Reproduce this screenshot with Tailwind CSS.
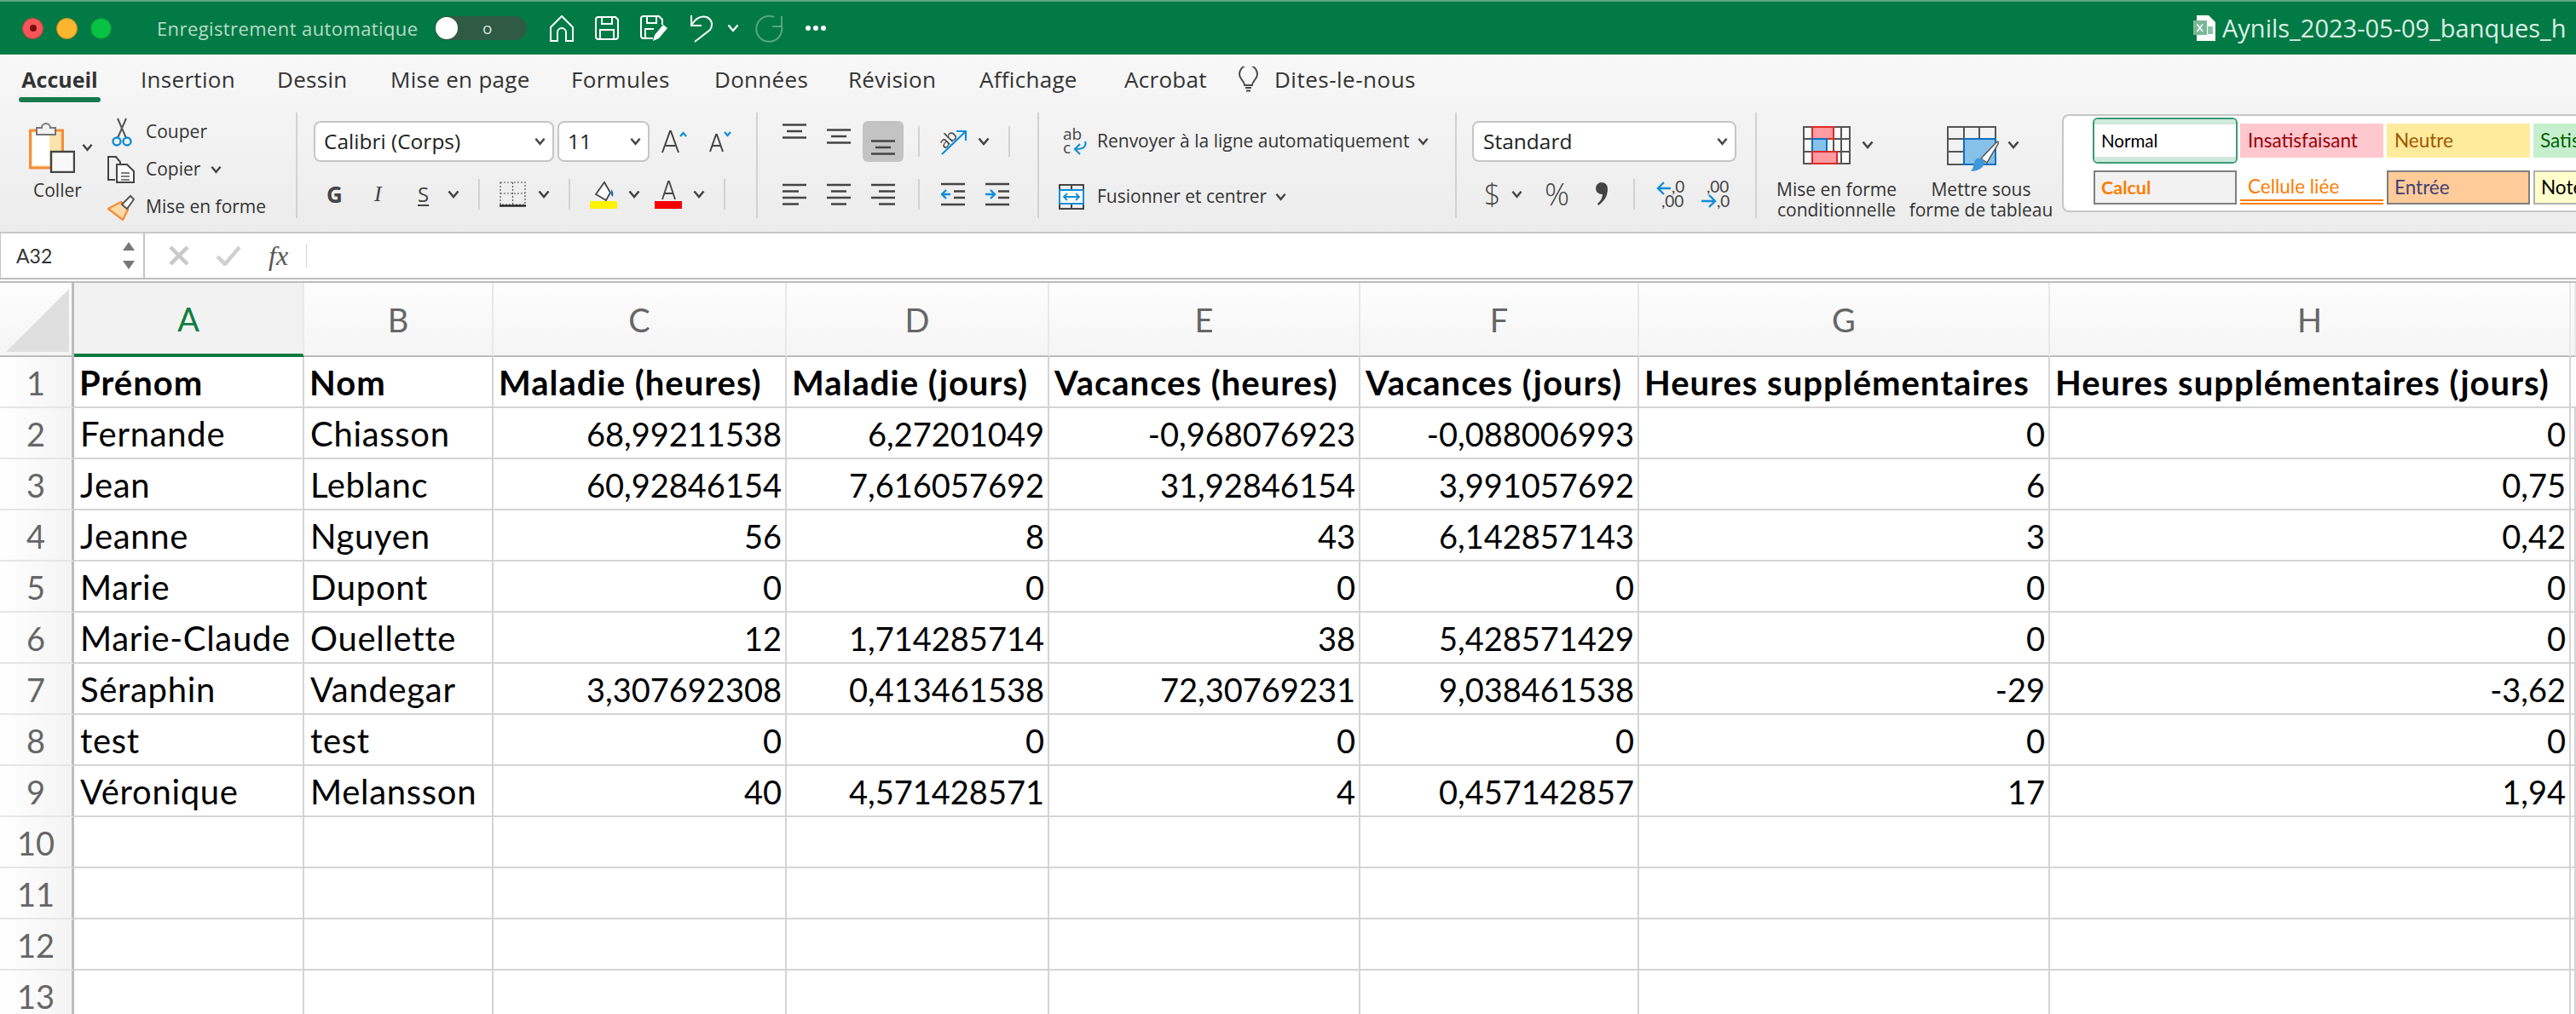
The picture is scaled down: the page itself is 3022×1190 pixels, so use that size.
<!DOCTYPE html>
<html lang="fr">
<head>
<meta charset="UTF-8">
<title>Aynils_2023-05-09_banques_h</title>
<script src="https://cdn.jsdelivr.net/npm/@tailwindcss/browser@4"></script>
</head>
<body class="w-[3022px] h-[1190px] overflow-hidden bg-white font-['Open_Sans',sans-serif] text-[#333]">

<svg class="hidden">
  <symbol id="chev" viewBox="0 0 14 10"><path d="M1.5 1.5 7 8l5.5-6.5" fill="none" stroke="#444" stroke-width="2.6"/></symbol>
  <symbol id="chevw" viewBox="0 0 14 10"><path d="M1.5 1.5 7 8l5.5-6.5" fill="none" stroke="#fff" stroke-width="2.2"/></symbol>
  <symbol id="al-left" viewBox="0 0 28 26"><path d="M0 2h28M0 9.500h19M0 17h28M0 24.500h19" stroke="#444" stroke-width="2.400"/></symbol>
  <symbol id="al-center" viewBox="0 0 28 26"><path d="M0 2h28M5 9.500h18M0 17h28M5 24.500h18" stroke="#444" stroke-width="2.400"/></symbol>
  <symbol id="al-right" viewBox="0 0 28 26"><path d="M0 2h28M9 9.500h19M0 17h28M9 24.500h19" stroke="#444" stroke-width="2.400"/></symbol>
  <symbol id="al-v" viewBox="0 0 28 18"><path d="M0 1.500h28M5 9h18M0 16.500h28" stroke="#444" stroke-width="2.400"/></symbol>
</svg>

<!-- barre de titre -->
<header class="h-[64px] bg-[#027a45] border-t-2 border-[#5fa585] flex items-center relative">
  <div class="w-[25px] h-[25px] ml-[26px] rounded-full bg-[#f4565a] border border-[#c9403f] flex items-center justify-center"><div class="w-[8px] h-[8px] rounded-full bg-[#7c0c0c]"></div></div>
  <div class="w-[25px] h-[25px] ml-[15px] rounded-full bg-[#fbb62f] border border-[#cf8e1d]"></div>
  <div class="w-[25px] h-[25px] ml-[15px] rounded-full bg-[#09c244] border border-[#0a8f35]"></div>
  <span class="ml-[53px] w-[326px] text-[22px] tracking-[0.4px] text-[#b9dcc9] whitespace-nowrap">Enregistrement automatique</span>
  <div class="w-[108px] h-[28px] rounded-full bg-[#2f5a44] flex items-center">
    <div class="w-[26px] h-[26px] rounded-full bg-white ml-px"></div>
    <span class="ml-[29px] text-[19px] leading-none text-[#cfe3d8]">o</span>
  </div>
  <svg class="ml-[27px]" width="28" height="31" viewBox="0 0 28 31"><path d="M14 1 27 14v16h-8V20a5 5 0 0 0-10 0v10H1V14Z" fill="none" stroke="#fff" stroke-width="2"/></svg>
  <svg class="ml-[25px]" width="28" height="28" viewBox="0 0 28 28"><path d="M4 1h20l3 3v20a3 3 0 0 1-3 3H4a3 3 0 0 1-3-3V4a3 3 0 0 1 3-3ZM8 1v8h12V1M6 27V16h16v11" fill="none" stroke="#fff" stroke-width="2"/></svg>
  <svg class="ml-[25px]" width="32" height="31" viewBox="0 0 32 31"><path d="M15 27H4a3 3 0 0 1-3-3V4a3 3 0 0 1 3-3h18l4 4v6M8 1v8h11V1M6 27V16h10" fill="none" stroke="#fff" stroke-width="2"/><path d="M15 30l2-7 10-12 5 4-10 12Z" fill="#fff"/></svg>
  <svg class="ml-[26px]" width="28" height="33" viewBox="0 0 28 33"><path d="M2 1v12h12M2 13C7 4 14 1 20 3c6 3 8 9 4 15L6 32" fill="none" stroke="#fff" stroke-width="2"/></svg>
  <svg class="ml-[16px]" width="14" height="10"><use href="#chevw"/></svg>
  <svg class="ml-[19px]" width="33" height="33" viewBox="0 0 33 33"><path d="M31 14A15 15 0 1 1 22 3M31 2v12H20" fill="none" stroke="#5aa583" stroke-width="2"/></svg>
  <div class="ml-[26px] flex gap-[3px]"><i class="w-[6px] h-[6px] rounded-full bg-white"></i><i class="w-[6px] h-[6px] rounded-full bg-white"></i><i class="w-[6px] h-[6px] rounded-full bg-white"></i></div>
  <svg class="ml-[1604px]" width="26" height="30" viewBox="0 0 26 30"><path d="M4 0h14l8 8v22H4Z" fill="#fff"/><rect x="0" y="6" width="16" height="17" fill="#79b998"/><path d="M4.500 10.500 11 19M11 10.500 4.500 19" stroke="#fff" stroke-width="1.500"/><path d="M17 13h6v9h-6Z" fill="#8cc4a8"/></svg>
  <span class="ml-[8px] text-[29px] font-medium text-[#dcefe5] whitespace-nowrap">Aynils_2023-05-09_banques_h</span>
</header>

<!-- ruban -->
<section class="h-[208px] bg-gradient-to-b from-[#f8f8f8] to-[#ececec]">
  <nav class="h-[68px] flex items-start text-[26px] tracking-[0.3px] leading-[36px] text-[#333] whitespace-nowrap">
    <div class="ml-[22px] w-[96px] flex flex-col items-center">
      <span class="mt-[11px] font-bold text-[25px] tracking-normal">Accueil</span>
      <i class="mt-[3px] w-[96px] h-[6px] rounded-full bg-[#167a4d]"></i>
    </div>
    <span class="mt-[11px] ml-[47px] w-[112px]">Insertion</span>
    <span class="mt-[11px] ml-[48px] w-[85px]">Dessin</span>
    <span class="mt-[11px] ml-[48px] w-[165px]">Mise en page</span>
    <span class="mt-[11px] ml-[47px] w-[120px]">Formules</span>
    <span class="mt-[11px] ml-[48px] w-[110px]">Données</span>
    <span class="mt-[11px] ml-[47px] w-[107px]">Révision</span>
    <span class="mt-[11px] ml-[47px] w-[122px]">Affichage</span>
    <span class="mt-[11px] ml-[48px] w-[100px]">Acrobat</span>
    <svg class="mt-[14px] ml-[34px]" width="23" height="30" viewBox="0 0 23 30"><path d="M7 22c0-5-6-7-6-13a10.500 10.500 0 0 1 21 0c0 6-6 8-6 13ZM8 25h7M9 28.500h5" fill="none" stroke="#444" stroke-width="1.800"/></svg>
    <span class="mt-[11px] ml-[19px] tracking-[0.5px]">Dites-le-nous</span>
  </nav>

  <div class="h-[124px] flex text-[21px] whitespace-nowrap">
    <!-- presse-papiers -->
    <div class="w-[347px] flex shrink-0">
      <div class="w-[126px] pt-[11px]">
        <div class="flex items-center pl-[34px]">
          <svg width="54" height="60" viewBox="0 0 54 60"><rect x="1.500" y="10" width="38" height="44" fill="#fde3ad" stroke="#f58c3b" stroke-width="3"/><rect x="4" y="13" width="20" height="38" fill="#fff"/><path d="M9 10v-3h6a5 5 0 0 1 10 0h6v8H9Z" fill="#f2f2f2" stroke="#777" stroke-width="2"/><rect x="26" y="35" width="27" height="24" fill="#f8f8f8" stroke="#444" stroke-width="2.400"/></svg>
          <svg class="ml-[8px]" width="13" height="10"><use href="#chev"/></svg>
        </div>
        <div class="mt-[5px] ml-[39px] leading-[30px] text-[#333]">Coller</div>
      </div>
      <div class="pt-px">
        <div class="h-[44px] flex items-center">
          <svg class="ml-[5px]" width="24" height="34" viewBox="0 0 24 34"><path d="M7 1 17 24M17 1 7 24" stroke="#555" stroke-width="2"/><circle cx="6" cy="28" r="4.500" fill="none" stroke="#0f8dd6" stroke-width="2.400"/><circle cx="18" cy="28" r="4.500" fill="none" stroke="#0f8dd6" stroke-width="2.400"/></svg>
          <span class="ml-[16px]">Couper</span>
        </div>
        <div class="h-[44px] flex items-center">
          <svg width="32" height="32" viewBox="0 0 32 32"><path d="M9 28H1V1h9l5 6v3" fill="none" stroke="#444" stroke-width="2"/><path d="M11 10h12l8 8v13H11Z" fill="#fbfbfb" stroke="#444" stroke-width="2"/><path d="M16 20h10M16 24h10M16 28h10" stroke="#555" stroke-width="1.600"/></svg>
          <span class="ml-[13px]">Copier</span>
          <svg class="ml-[12px]" width="13" height="10"><use href="#chev"/></svg>
        </div>
        <div class="h-[44px] flex items-center">
          <svg width="32" height="31" viewBox="0 0 32 31"><path d="M1 17 16 9l8 9-6 12Z" fill="#fdd9a8" stroke="#f58c3b" stroke-width="2.400"/><path d="M17 12 27 2l4 4-8 11Z" fill="#fff" stroke="#555" stroke-width="2"/></svg>
          <span class="ml-[13px]">Mise en forme</span>
        </div>
      </div>
    </div>
    <i class="w-[2px] bg-[#d2d2d2] shrink-0"></i>

    <!-- police -->
    <div class="w-[538px] shrink-0">
      <div class="mt-[10px] h-[48px] flex items-center">
        <div class="ml-[19px] w-[282px] h-[48px] rounded-[8px] border-2 border-[#c6c6c6] bg-white flex items-center justify-between pl-[10px] pr-[8px] text-[#222] text-[24.500px]"><span>Calibri (Corps)</span><svg width="13" height="10"><use href="#chev"/></svg></div>
        <div class="ml-[4px] w-[108px] h-[48px] rounded-[8px] border-2 border-[#c6c6c6] bg-white flex items-center justify-between pl-[10px] pr-[8px] text-[#222] text-[24.500px]"><span>11</span><svg width="13" height="10"><use href="#chev"/></svg></div>
        <svg class="ml-[14px]" width="30" height="28" viewBox="0 0 30 28"><path d="M1 27 10 2h1l9 25M5 19h11" fill="none" stroke="#444" stroke-width="2"/><path d="M22 8l3.500-4L29 8" fill="none" stroke="#0f8dd6" stroke-width="2.200"/></svg>
        <svg class="ml-[26px]" width="26" height="26" viewBox="0 0 26 26"><path d="M1 25 8 5h1l7 20M4 18h9" fill="none" stroke="#444" stroke-width="2"/><path d="M18 2l3.500 4L25 2" fill="none" stroke="#0f8dd6" stroke-width="2.200"/></svg>
      </div>
      <div class="mt-[20px] h-[36px] flex items-center">
        <span class="ml-[34px] w-[18px] text-[26px] font-bold text-[#444] leading-none">G</span>
        <span class="ml-[38px] w-[12px] text-[26px] italic font-['Liberation_Serif',serif] text-[#444] leading-none">I</span>
        <span class="ml-[39px] w-[14px] text-[24px] underline underline-offset-3 text-[#444] leading-none">S</span>
        <svg class="ml-[21px]" width="14" height="10"><use href="#chev"/></svg>
        <i class="ml-[22px] w-[2px] h-[36px] bg-[#d2d2d2]"></i>
        <svg class="ml-[23px]" width="31" height="30" viewBox="0 0 31 30"><path d="M1 1h29v26H1ZM15.500 1v26M1 14h29" fill="none" stroke="#555" stroke-width="1.200" stroke-dasharray="2 2"/><path d="M0 28.500h31" stroke="#222" stroke-width="2.400"/></svg>
        <svg class="ml-[14px]" width="14" height="10"><use href="#chev"/></svg>
        <i class="ml-[22px] w-[2px] h-[36px] bg-[#d2d2d2]"></i>
        <svg class="ml-[23px]" width="32" height="34" viewBox="0 0 32 34"><path d="M7 17 17 3l7 12-5 9Z" fill="#fff" stroke="#444" stroke-width="1.800"/><path d="M25 11c2 2 3 5 2 9l-2-2Z" fill="#0f6fc0"/><rect y="25" width="32" height="9" fill="#fff200"/></svg>
        <svg class="ml-[13px]" width="14" height="10"><use href="#chev"/></svg>
        <svg class="ml-[17px]" width="32" height="34" viewBox="0 0 32 34"><path d="M9 23 16 2h1l7 21M11 16h11" fill="none" stroke="#444" stroke-width="1.800"/><rect y="25" width="32" height="9" fill="#f50000"/></svg>
        <svg class="ml-[13px]" width="14" height="10"><use href="#chev"/></svg>
        <i class="ml-[22px] w-[2px] h-[36px] bg-[#d2d2d2]"></i>
      </div>
    </div>
    <i class="w-[2px] bg-[#d2d2d2] shrink-0"></i>

    <!-- alignement -->
    <div class="w-[328px] shrink-0">
      <div class="mt-[10px] h-[48px] flex items-center">
        <svg class="ml-[29px] mb-[24px]" width="28" height="18"><use href="#al-v"/></svg>
        <svg class="ml-[24px] mb-[12px]" width="28" height="18"><use href="#al-v"/></svg>
        <div class="ml-[14px] w-[48px] h-[48px] rounded-[6px] bg-[#c3c3c3] flex justify-center items-end pb-[8px]"><svg width="28" height="18"><use href="#al-v"/></svg></div>
        <i class="ml-[17px] w-[2px] h-[36px] bg-[#d2d2d2]"></i>
        <svg class="ml-[23px]" width="33" height="32" viewBox="0 0 33 32"><path d="M3 31 30 5M20 4h11v11" fill="none" stroke="#0f8dd6" stroke-width="2.200"/><text x="0" y="20" font-size="19" fill="#444" transform="rotate(-45 10 15)" font-family="Open Sans">ab</text></svg>
        <svg class="ml-[12px]" width="14" height="10"><use href="#chev"/></svg>
        <i class="ml-[22px] w-[2px] h-[36px] bg-[#d2d2d2]"></i>
      </div>
      <div class="mt-[20px] h-[36px] flex items-center">
        <svg class="ml-[29px]" width="28" height="26"><use href="#al-left"/></svg>
        <svg class="ml-[24px]" width="28" height="26"><use href="#al-center"/></svg>
        <svg class="ml-[24px]" width="28" height="26"><use href="#al-right"/></svg>
        <i class="ml-[27px] w-[2px] h-[36px] bg-[#d2d2d2]"></i>
        <svg class="ml-[25px]" width="28" height="28" viewBox="0 0 28 28"><path d="M0 2h28M15 10.500h13M15 18h13M0 26h28" stroke="#444" stroke-width="2.400"/><path d="M11 14H1M6 9l-5 5 5 5" fill="none" stroke="#0f8dd6" stroke-width="2.400"/></svg>
        <svg class="ml-[24px]" width="28" height="28" viewBox="0 0 28 28"><path d="M0 2h28M15 10.500h13M15 18h13M0 26h28" stroke="#444" stroke-width="2.400"/><path d="M0 14h10M6 9l5 5-5 5" fill="none" stroke="#0f8dd6" stroke-width="2.400"/></svg>
      </div>
    </div>
    <i class="w-[2px] bg-[#d2d2d2] shrink-0"></i>

    <!-- renvoyer / fusionner -->
    <div class="w-[488px] shrink-0">
      <div class="mt-[10px] h-[48px] flex items-center">
        <svg class="ml-[28px]" width="28" height="32" viewBox="0 0 28 32"><text x="0" y="14" font-size="19" fill="#444" font-family="Open Sans">ab</text><text x="0" y="30" font-size="19" fill="#444" font-family="Open Sans">c</text><path d="M26 16c2 6-2 9-11 9M20 19l-6 6 6 6" fill="none" stroke="#0f8dd6" stroke-width="2.200"/></svg>
        <span class="ml-[12px]">Renvoyer à la ligne automatiquement</span>
        <svg class="ml-[10px]" width="13" height="10"><use href="#chev"/></svg>
      </div>
      <div class="mt-[23px] h-[36px] flex items-center">
        <svg class="ml-[23px]" width="30" height="30" viewBox="0 0 30 30"><path d="M1 1h28v28H1ZM15 1v6M15 23v6" fill="none" stroke="#444" stroke-width="2"/><rect x="1" y="7" width="28" height="16" fill="#fff" stroke="#0f8dd6" stroke-width="2"/><path d="M6 15h18M10 11l-4 4 4 4M20 11l4 4-4 4" fill="none" stroke="#0f8dd6" stroke-width="1.800"/></svg>
        <span class="ml-[15px]">Fusionner et centrer</span>
        <svg class="ml-[10px]" width="13" height="10"><use href="#chev"/></svg>
      </div>
    </div>
    <i class="w-[2px] bg-[#d2d2d2] shrink-0"></i>

    <!-- nombre -->
    <div class="w-[350px] shrink-0">
      <div class="mt-[10px] ml-[18px] w-[310px] h-[48px] rounded-[8px] border-2 border-[#c6c6c6] bg-white flex items-center justify-between pl-[11px] pr-[8px] text-[#222] text-[24.500px]"><span>Standard</span><svg width="13" height="10"><use href="#chev"/></svg></div>
      <div class="mt-[20px] h-[36px] flex items-center text-[#444]">
        <span class="ml-[32px] w-[20px] text-[34px] leading-none font-light">$</span>
        <svg class="ml-[12px]" width="13" height="10"><use href="#chev"/></svg>
        <span class="ml-[26px] w-[34px] text-[36px] leading-none font-light">%</span>
        <svg class="ml-[25px]" width="16" height="30" viewBox="0 0 16 30"><circle cx="8" cy="8" r="7" fill="#444"/><path d="M15 9c0 9-5 15-11 19l-1-2c4-3 6-7 6-12Z" fill="#444"/></svg>
        <i class="ml-[29px] w-[2px] h-[36px] bg-[#d2d2d2]"></i>
        <svg class="ml-[25px]" width="33" height="34" viewBox="0 0 33 34"><path d="M17 10H2M9 3 2 10l7 7" fill="none" stroke="#0f8dd6" stroke-width="2.400"/><text x="18" y="15" font-size="19" fill="#444" font-family="Lato">,0</text><text x="6" y="32" font-size="19" fill="#444" font-family="Lato">,00</text></svg>
        <svg class="ml-[20px]" width="33" height="34" viewBox="0 0 33 34"><text x="6" y="15" font-size="19" fill="#444" font-family="Lato">,00</text><path d="M0 25h15M9 18l7 7-7 7" fill="none" stroke="#0f8dd6" stroke-width="2.400"/><text x="18" y="32" font-size="19" fill="#444" font-family="Lato">,0</text></svg>
      </div>
    </div>
    <i class="w-[2px] bg-[#d2d2d2] shrink-0"></i>

    <!-- styles -->
    <div class="flex-1 flex min-w-0">
      <div class="ml-[23px] w-[141px] shrink-0 pt-[16px]">
        <div class="h-[63px] flex items-start pl-[31px]">
          <svg width="56" height="45" viewBox="0 0 56 45"><path d="M1 1h54v43H1ZM1 15h54M1 30h54M36 1v43M45 1v43M11 1v43" fill="#fafafa" stroke="#555" stroke-width="2"/><rect x="11" y="1" width="25" height="14" fill="#ff9ba1" stroke="#dd2a24" stroke-width="2"/><rect x="11" y="15" width="17" height="15" fill="#86c1ea" stroke="#0f6fc0" stroke-width="2"/><rect x="11" y="30" width="29" height="14" fill="#ff9ba1" stroke="#dd2a24" stroke-width="2"/></svg>
          <svg class="ml-[13px] mt-[17px]" width="14" height="10"><use href="#chev"/></svg>
        </div>
        <div class="text-center leading-[24px] -mt-[1px]">Mise en forme<br>conditionnelle</div>
      </div>
      <div class="ml-[14px] w-[170px] shrink-0 pt-[16px]">
        <div class="h-[63px] flex items-start pl-[45px]">
          <svg width="62" height="54" viewBox="0 0 62 54"><path d="M1 1h56v44H1ZM1 15h56M1 30h56M20 1v44M38 1v44" fill="none" stroke="#555" stroke-width="2"/><rect x="20" y="15" width="37" height="30" fill="#86c1ea" stroke="#0f6fc0" stroke-width="2"/><path d="M40 38 58 19c2-2 3 0 2 2L47 43Z" fill="#fff" stroke="#555" stroke-width="1.500"/><path d="M35 38c5-2 10 2 9 6-2 6-9 9-16 9 4-4 3-12 7-15Z" fill="#3f97d8"/></svg>
          <svg class="ml-[9px] mt-[17px]" width="14" height="10"><use href="#chev"/></svg>
        </div>
        <div class="text-center leading-[24px] -mt-[1px]">Mettre sous<br>forme de tableau</div>
      </div>
      <div class="ml-[10px] flex-1 h-[115px] mt-[2px] bg-white border-2 border-r-0 border-[#c6c6c6] rounded-l-[8px] overflow-hidden font-[Lato,sans-serif] text-[22.500px] pl-[34px] pt-[2px]">
        <div class="h-[54px] flex items-center">
          <div class="w-[170px] h-[54px] shrink-0 rounded-[6px] border-2 border-[#3a9b73] bg-white flex flex-col justify-between overflow-hidden text-black text-[20.500px]">
            <i class="h-[6px] bg-[#cfe8dc]"></i><span class="pl-[8px] leading-none">Normal</span><i class="h-[6px] bg-[#cfe8dc]"></i>
          </div>
          <div class="ml-[3px] w-[168px] h-[40px] shrink-0 bg-[#ffc7ce] text-[#9c0006] flex items-center pl-[9px]">Insatisfaisant</div>
          <div class="ml-[4px] w-[168px] h-[40px] shrink-0 bg-[#ffeb9c] text-[#9c5700] flex items-center pl-[9px]">Neutre</div>
          <div class="ml-[4px] w-[168px] h-[40px] shrink-0 bg-[#c6efce] text-[#006100] flex items-center pl-[8px]">Satisfaisant</div>
        </div>
        <div class="h-[40px] mt-[8px] flex items-center">
          <div class="ml-[1px] w-[168px] h-[40px] shrink-0 bg-[#f2f2f2] border-2 border-[#7f7f7f] text-[#fa7d00] font-bold text-[21.500px] flex items-center pl-[7px]">Calcul</div>
          <div class="ml-[4px] w-[168px] h-[40px] shrink-0 border-b-[6px] border-double border-[#fa7d00] text-[#fa7d00] flex items-center pl-[9px] pt-[3px]">Cellule liée</div>
          <div class="ml-[4px] w-[168px] h-[40px] shrink-0 bg-[#ffcc99] border-2 border-[#7f7f7f] text-[#3f3f76] flex items-center pl-[7px]">Entrée</div>
          <div class="ml-[4px] w-[168px] h-[40px] shrink-0 bg-[#ffffcc] border-2 border-[#b2b2b2] text-black flex items-center pl-[7px]">Note</div>
        </div>
      </div>
    </div>
  </div>
</section>

<!-- barre de formule -->
<div class="h-[54px] border-t-2 border-[#c8c8c8] flex">
  <div class="w-[170px] h-[52px] bg-white border-l border-r-2 border-[#c4c4c4] flex items-center justify-between pl-[18px] pr-[9px] text-[21px] text-[#333] shrink-0">
    <span class="font-[Lato,sans-serif] text-[23px]">A32</span>
    <svg width="16" height="34" viewBox="0 0 16 34"><path d="M8 1 15 11H1ZM1 23H15L8 33Z" fill="#777"/></svg>
  </div>
  <div class="flex-1 h-[52px] bg-white flex items-center">
    <svg class="ml-[28px]" width="24" height="22" viewBox="0 0 24 22"><path d="M2 1 22 21M22 1 2 21" stroke="#c9c9c9" stroke-width="4.500"/></svg>
    <svg class="ml-[31px]" width="30" height="24" viewBox="0 0 30 24"><path d="M2 13 11 22 28 2" fill="none" stroke="#d0d0d0" stroke-width="4.500"/></svg>
    <span class="ml-[32px] w-[27px] text-[32px] leading-none italic font-['Liberation_Serif',serif] text-[#555]">fx</span>
    <i class="ml-[17px] w-[1px] h-[28px] bg-[#d2d2d2]"></i>
  </div>
</div>
<div class="h-[6px] border-y-2 border-[#bdbdbd] bg-white"></div>

<!-- feuille -->
<main id="feuille" class="grid grid-cols-[87px_270px_222px_344px_308px_365px_327px_482px_611px_6px] grid-rows-[87px] auto-rows-[60px] font-[Lato,sans-serif] text-[38px] text-black"></main>

<script>
  const colonnes = ['A', 'B', 'C', 'D', 'E', 'F', 'G', 'H', '']
  const lignes = [
    ['Prénom', 'Nom', 'Maladie (heures)', 'Maladie (jours)', 'Vacances (heures)', 'Vacances (jours)', 'Heures supplémentaires', 'Heures supplémentaires (jours)'],
    ['Fernande', 'Chiasson', '68,99211538', '6,27201049', '-0,968076923', '-0,088006993', '0', '0'],
    ['Jean', 'Leblanc', '60,92846154', '7,616057692', '31,92846154', '3,991057692', '6', '0,75'],
    ['Jeanne', 'Nguyen', '56', '8', '43', '6,142857143', '3', '0,42'],
    ['Marie', 'Dupont', '0', '0', '0', '0', '0', '0'],
    ['Marie-Claude', 'Ouellette', '12', '1,714285714', '38', '5,428571429', '0', '0'],
    ['Séraphin', 'Vandegar', '3,307692308', '0,413461538', '72,30769231', '9,038461538', '-29', '-3,62'],
    ['test', 'test', '0', '0', '0', '0', '0', '0'],
    ['Véronique', 'Melansson', '40', '4,571428571', '4', '0,457142857', '17', '1,94'],
    [], [], [], []
  ]

  const enteteCol = 'bg-gradient-to-b from-[#fdfdfd] to-[#f5f5f5] border-r-2 border-[#e8e8e8] border-b-2 border-b-[#bcbcbc] flex items-center justify-center pt-[2px] text-[#666]'
  const enteteActif = 'bg-[#f2f2f2] border-r-2 border-[#e8e8e8] border-b-[4px] border-b-[#107c41] flex items-center justify-center pt-[2px] text-[#107c41]'
  const numLigne = 'bg-gradient-to-r from-white to-[#f4f4f4] border-r-[3px] border-[#bcbcbc] border-b-2 border-b-[#e6e6e6] flex items-center justify-center pt-[2px] text-[#666]'
  const cellule = 'border-r-2 border-b-2 border-[#d4d4d4] flex items-center justify-start pl-[7px] pt-[2px] whitespace-nowrap text-[40px] tracking-[0.7px]'
  const celluleNum = 'border-r-2 border-b-2 border-[#d4d4d4] flex items-center justify-end pr-[4px] pt-[2px] whitespace-nowrap'
  const celluleGras = 'border-r-2 border-b-2 border-[#d4d4d4] flex items-center justify-start pl-[6px] pt-[2px] whitespace-nowrap font-bold text-[40px] tracking-[1px]'

  let html = `<div class="bg-gradient-to-b from-[#fdfdfd] to-[#f5f5f5] border-r-[3px] border-b-2 border-[#bcbcbc] flex items-end justify-end pr-[3px] pb-[4px]"><svg width="74" height="74"><path d="M74 0V74H0Z" fill="#dfdfdf"/></svg></div>`
  colonnes.forEach((c, i) => {
    html += `<div class="${i == 0 ? enteteActif : enteteCol}">${c}</div>`
  })
  // la dernière colonne ne fait que 6px
  lignes.forEach((ligne, n) => {
    html += `<div class="${numLigne}">${n + 1}</div>`
    for (let i = 0; i < 9; i++) {
      const val = ligne[i] || ''
      let cl = i < 2 ? cellule : celluleNum
      if (n == 0) cl = celluleGras
      html += `<div class="${cl}">${val}</div>`
    }
  })
  document.getElementById('feuille').innerHTML = html
</script>
</body>
</html>
